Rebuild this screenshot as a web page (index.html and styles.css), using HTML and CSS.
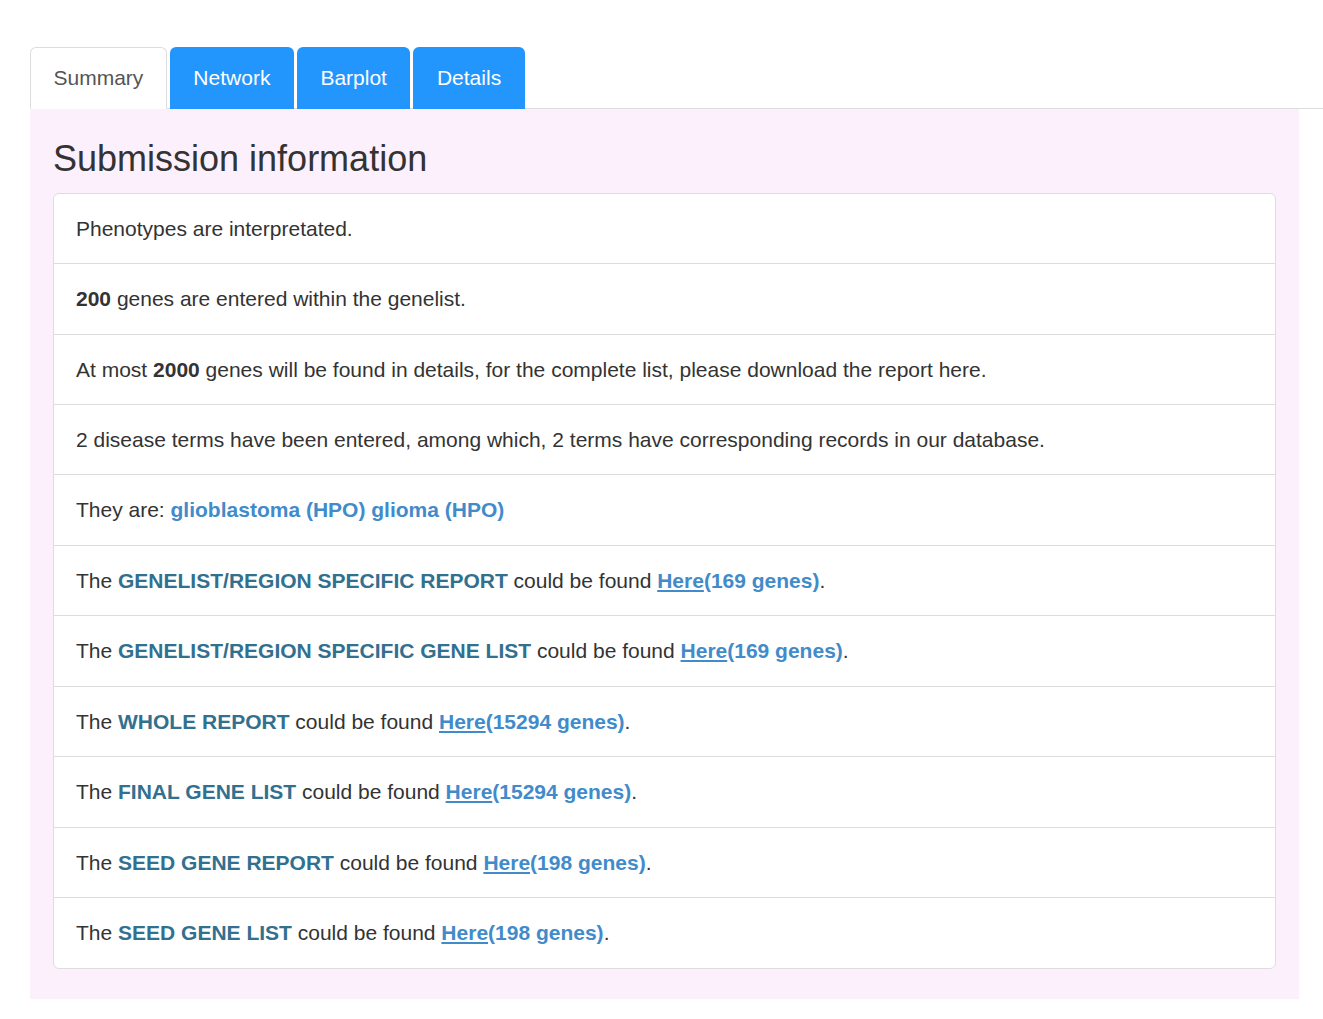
FILE: index.html
```html
<!DOCTYPE html>
<html>
<head>
<meta charset="utf-8">
<link rel="stylesheet" href="styles.css">
</head>
<body>
<div class="page">
  <ul class="tabs">
    <li class="tab active">Summary</li>
    <li class="tab">Network</li>
    <li class="tab">Barplot</li>
    <li class="tab">Details</li>
  </ul>
  <div class="panel">
    <h3 class="title">Submission information</h3>
    <ul class="list">
      <li class="item">Phenotypes are interpretated.</li>
      <li class="item"><b>200</b> genes are entered within the genelist.</li>
      <li class="item">At most <b>2000</b> genes will be found in details, for the complete list, please download the report here.</li>
      <li class="item">2 disease terms have been entered, among which, 2 terms have corresponding records in our database.</li>
      <li class="item">They are: <span class="term">glioblastoma (HPO)</span> <span class="term">glioma (HPO)</span></li>
      <li class="item">The <span class="key">GENELIST/REGION SPECIFIC REPORT</span> could be found <a class="here">Here</a><span class="count">(169 genes)</span>.</li>
      <li class="item">The <span class="key">GENELIST/REGION SPECIFIC GENE LIST</span> could be found <a class="here">Here</a><span class="count">(169 genes)</span>.</li>
      <li class="item">The <span class="key">WHOLE REPORT</span> could be found <a class="here">Here</a><span class="count">(15294 genes)</span>.</li>
      <li class="item">The <span class="key">FINAL GENE LIST</span> could be found <a class="here">Here</a><span class="count">(15294 genes)</span>.</li>
      <li class="item">The <span class="key">SEED GENE REPORT</span> could be found <a class="here">Here</a><span class="count">(198 genes)</span>.</li>
      <li class="item">The <span class="key">SEED GENE LIST</span> could be found <a class="here">Here</a><span class="count">(198 genes)</span>.</li>
    </ul>
  </div>
</div>
</body>
</html>
```
FILE: styles.css
```css
html, body {
  margin: 0;
  padding: 0;
  background: #fff;
}
body {
  font-family: "Liberation Sans", Arial, sans-serif;
  font-size: 21px;
  color: #333;
}
.page {
  padding: 47px 0 0 30px;
}
.tabs {
  list-style: none;
  margin: 0;
  padding: 0;
  display: flex;
  border-bottom: 1px solid #ddd;
}
.tab {
  margin: 0 3px -1px 0;
  padding: 15px 22.5px;
  line-height: 30px;
  border: 1px solid #2396fd;
  border-bottom-color: transparent;
  border-radius: 6px 6px 0 0;
  background: #2396fd;
  color: #fff;
}
.tab.active {
  background: #fff;
  color: #555;
  border-color: #ddd;
  border-bottom-color: #fff;
}
.panel {
  width: 1269px;
  box-sizing: border-box;
  background: #fcf0fd;
  padding: 30px 23px 30px;
}
.title {
  margin: 0 0 14px;
  font-size: 36px;
  font-weight: 500;
  line-height: 39.6px;
  color: #333;
}
.list {
  list-style: none;
  margin: 0;
  padding: 0;
  background: #fff;
  border: 1px solid #ddd;
  border-radius: 6px;
}
.item {
  padding: 20px 22px;
  line-height: 29.45px;
  border-top: 1px solid #ddd;
}
.item:first-child {
  border-top: none;
}
.item b {
  font-weight: bold;
  color: #333;
}
.term {
  font-weight: bold;
  color: #428bca;
}
.key {
  font-weight: bold;
  color: #31708f;
}
.here {
  font-weight: bold;
  color: #428bca;
  text-decoration: underline;
}
.count {
  font-weight: bold;
  color: #428bca;
}
```
